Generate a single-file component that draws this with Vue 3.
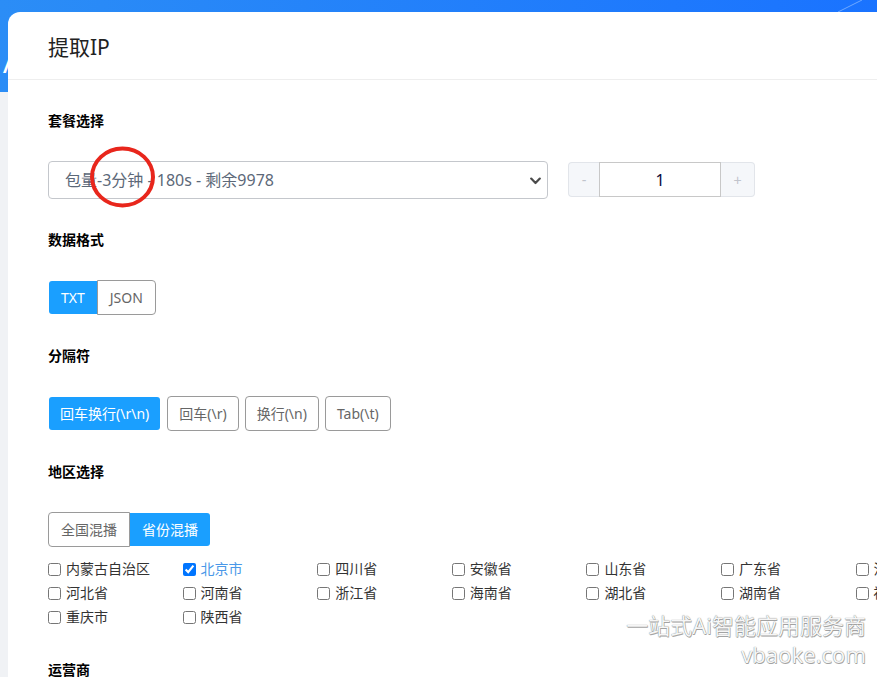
<template>
  <div class="page">
    <div class="hero">
      <span class="hero-title">A</span>
      <svg class="hero-line" width="40" height="12" viewBox="0 0 40 12">
        <path d="M0 12L24 0" stroke="#6fa8ff" stroke-width="1" fill="none" />
      </svg>
    </div>

    <div class="card">
      <div class="card-header">提取IP</div>
      <div class="card-body">
        <div class="section">
          <div class="label">套餐选择</div>
          <div class="package-row">
            <div class="select-wrap">
              <select v-model="pkg" class="select">
                <option>包量-3分钟 - 180s - 剩余9978</option>
              </select>
              <svg class="chevron" width="11" height="8" viewBox="0 0 11 8">
                <path d="M1.2 1.6L5.5 6 9.8 1.6" fill="none" stroke="#4a4a4a" stroke-width="2.2" stroke-linecap="round" stroke-linejoin="round" />
              </svg>
            </div>
            <div class="stepper">
              <button class="step minus">-</button>
              <input v-model="count" class="count" />
              <button class="step plus">+</button>
            </div>
          </div>
        </div>

        <div class="section">
          <div class="label">数据格式</div>
          <div class="btn-group">
            <button
              v-for="f in formats"
              :key="f"
              :class="['btn', { active: format === f }]"
              @click="format = f"
            >
              {{ f }}
            </button>
          </div>
        </div>

        <div class="section">
          <div class="label">分隔符</div>
          <div class="btn-list">
            <button
              v-for="s in separators"
              :key="s"
              :class="['btn', { active: separator === s }]"
              @click="separator = s"
            >
              {{ s }}
            </button>
          </div>
        </div>

        <div class="section">
          <div class="label">地区选择</div>
          <div class="btn-group">
            <button
              v-for="m in modes"
              :key="m"
              :class="['btn', { active: mode === m }]"
              @click="mode = m"
            >
              {{ m }}
            </button>
          </div>
          <div class="regions">
            <label
              v-for="r in regions"
              :key="r"
              :class="['region', { checked: picked.includes(r) }]"
            >
              <input v-model="picked" type="checkbox" :value="r" />
              <span>{{ r }}</span>
            </label>
          </div>
        </div>

        <div class="section">
          <div class="label">运营商</div>
        </div>
      </div>
    </div>

    <!-- annotation and watermark sit on top of the screenshot -->
    <svg class="circle" width="70" height="66" viewBox="0 0 70 66">
      <ellipse cx="35.5" cy="32" rx="30.5" ry="28.5" fill="none" stroke="#e8261c" stroke-width="4" />
    </svg>
    <div class="watermark">
      <div>一站式Ai智能应用服务商</div>
      <div class="site">vbaoke.com</div>
    </div>
  </div>
</template>

<script setup>
import { ref } from "vue";

const pkg = ref("包量-3分钟 - 180s - 剩余9978");
const count = ref(1);

const formats = ["TXT", "JSON"];
const format = ref("TXT");

const separators = ["回车换行(\\r\\n)", "回车(\\r)", "换行(\\n)", "Tab(\\t)"];
const separator = ref(separators[0]);

const modes = ["全国混播", "省份混播"];
const mode = ref("省份混播");

const regions = [
  "内蒙古自治区", "北京市", "四川省", "安徽省", "山东省", "广东省", "江苏省",
  "河北省", "河南省", "浙江省", "海南省", "湖北省", "湖南省", "福建省",
  "重庆市", "陕西省",
];
const picked = ref(["北京市"]);
</script>

<style>
html,
body {
  height: 100%;
  overflow: hidden;
}
</style>

<style scoped>
.page {
  position: relative;
  height: 677px;
  overflow: hidden;
  background: #f0f2f5;
  font-family: "Noto Sans", "Noto Sans CJK SC", sans-serif;
}

.hero {
  position: relative;
  height: 92px;
  background: linear-gradient(90deg, #2b8df6, #1a73ff);
}
.hero-title {
  position: absolute;
  left: 3px;
  top: 42px;
  font-size: 30px;
  line-height: 40px;
  color: #fff;
}
.hero-line {
  position: absolute;
  left: 838px;
  top: 0;
}

.card {
  position: relative;
  margin: -80px -160px 0 8px;
  height: 800px;
  background: #fff;
  border-radius: 12px 0 0 0;
}
.card-header {
  height: 67px;
  padding-left: 40px;
  font-size: 21px;
  line-height: 70px;
  color: #222;
  border-bottom: 1px solid #eeeeee;
}
.card-body {
  padding: 30px 40px;
}

.section {
  margin-bottom: 30px;
}
.label {
  height: 22px;
  margin-bottom: 29px;
  font-size: 14px;
  font-weight: 700;
  line-height: 21px;
  color: #000;
}

.package-row {
  display: flex;
  align-items: flex-start;
  gap: 20px;
}
.select-wrap {
  position: relative;
  width: 500px;
  height: 38px;
}
.select {
  width: 100%;
  height: 100%;
  padding: 0 40px 0 16px;
  appearance: none;
  background: #fff;
  border: 1px solid #c4c7cc;
  border-radius: 4px;
  font-family: inherit;
  font-size: 16px;
  color: #5c6878;
}
.chevron {
  position: absolute;
  right: 7px;
  top: 16px;
  pointer-events: none;
}

.stepper {
  display: flex;
  width: 187px;
  height: 35px;
  margin-top: 1px;
}
.step {
  padding: 0;
  background: #f5f7fa;
  border: 1px solid #e2e5ea;
  font-size: 14px;
  color: #c0c4cc;
}
.minus {
  width: 32px;
  border-radius: 4px 0 0 4px;
  border-right: 0;
}
.plus {
  width: 35px;
  border-radius: 0 4px 4px 0;
  border-left: 0;
}
.count {
  width: 120px;
  padding: 0;
  border: 1px solid #c8c8c8;
  font-family: inherit;
  font-size: 16px;
  text-align: center;
  color: #0a0a3c;
  outline: none;
}

.btn-group,
.btn-list {
  display: flex;
}
.btn-list {
  gap: 6px;
}
.btn-list .btn {
  padding: 0 11px;
}
.btn {
  height: 35px;
  padding: 0 12px;
  background: #fff;
  background-clip: padding-box;
  border: 1px solid #9a9a9a;
  border-radius: 4px;
  font-family: inherit;
  font-size: 14px;
  line-height: 33px;
  color: #666;
}
.btn.active {
  background-color: #1a9fff;
  border-color: transparent;
  color: #fff;
}
.btn-group .btn:first-child {
  border-radius: 4px 0 0 4px;
}
.btn-group .btn:last-child {
  border-radius: 0 4px 4px 0;
  margin-left: -1px;
}

.regions {
  display: flex;
  flex-wrap: wrap;
  width: 943px;
  margin-top: 10px;
}
.region {
  display: flex;
  align-items: center;
  gap: 5px;
  width: 134.6px;
  height: 24px;
  font-size: 14px;
  line-height: 22px;
  color: #333;
}
.region input {
  margin: 0;
  width: 13px;
  height: 13px;
}
.region.checked {
  color: #4a98e8;
}

.circle {
  position: absolute;
  left: 87px;
  top: 145px;
}
.watermark {
  position: absolute;
  right: 11px;
  top: 610px;
  text-align: right;
  font-size: 22px;
  line-height: 30px;
  color: #f6f6f6;
  text-shadow: 0 0 1px #666, 0.5px 0.5px 0 #aaa;
  pointer-events: none;
}
.site {
  line-height: 28px;
}
</style>
